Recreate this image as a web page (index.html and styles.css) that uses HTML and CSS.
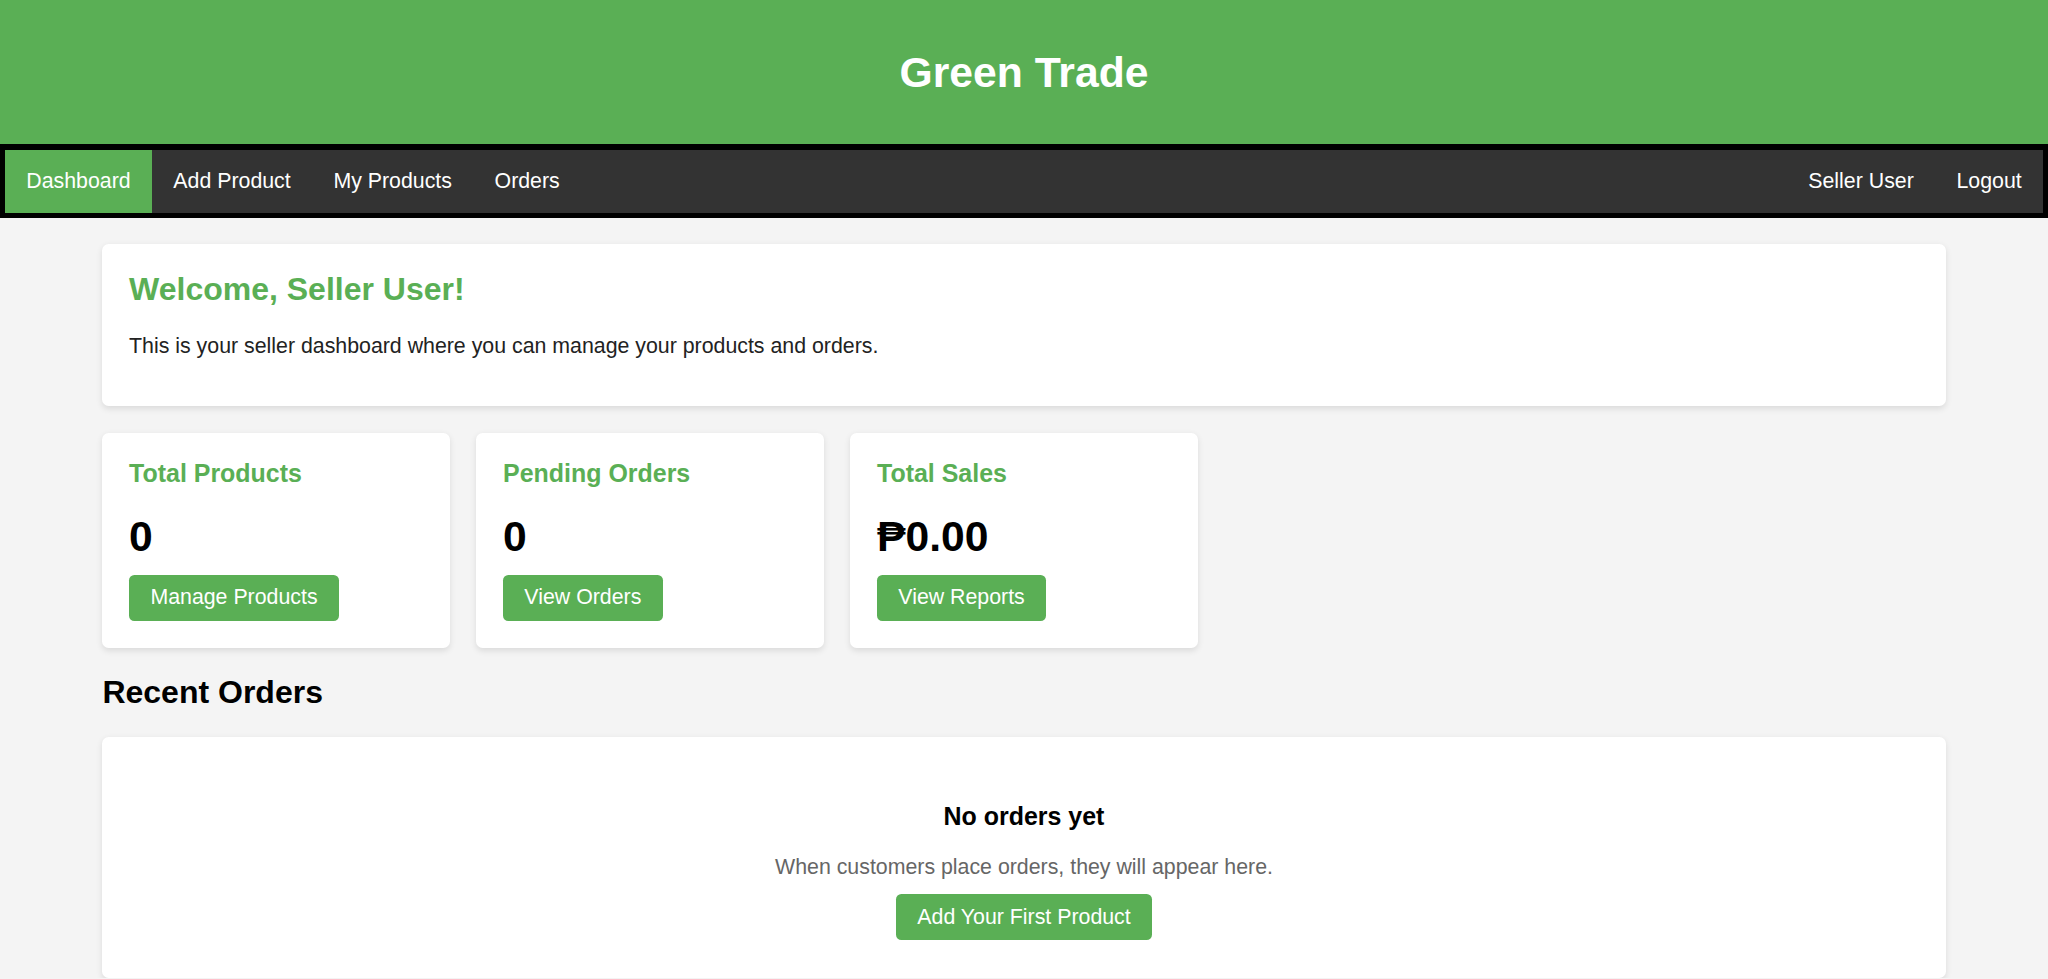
FILE: index.html
```html
<!DOCTYPE html>
<html lang="en">
<head>
<meta charset="utf-8">
<title>Green Trade - Seller Dashboard</title>
<link rel="stylesheet" href="styles.css">
</head>
<body>
<header class="site-header">
  <h1 class="site-title">Green Trade</h1>
</header>
<nav class="main-nav">
  <div class="nav-left">
    <a class="nav-link active" href="#">Dashboard</a>
    <a class="nav-link" href="#">Add Product</a>
    <a class="nav-link" href="#">My Products</a>
    <a class="nav-link" href="#">Orders</a>
  </div>
  <div class="nav-right">
    <a class="nav-link" href="#">Seller User</a>
    <a class="nav-link" href="#">Logout</a>
  </div>
</nav>
<main class="container">
  <section class="card welcome">
    <h2 class="welcome-title">Welcome, Seller User!</h2>
    <p class="welcome-text">This is your seller dashboard where you can manage your products and orders.</p>
  </section>
  <section class="stats">
    <div class="card stat">
      <h3 class="stat-title">Total Products</h3>
      <div class="stat-value">0</div>
      <a class="btn" href="#">Manage Products</a>
    </div>
    <div class="card stat">
      <h3 class="stat-title">Pending Orders</h3>
      <div class="stat-value">0</div>
      <a class="btn" href="#">View Orders</a>
    </div>
    <div class="card stat">
      <h3 class="stat-title">Total Sales</h3>
      <div class="stat-value">₱0.00</div>
      <a class="btn" href="#">View Reports</a>
    </div>
  </section>
  <h2 class="section-title">Recent Orders</h2>
  <section class="card orders">
    <div class="empty-state">
      <h3 class="empty-title">No orders yet</h3>
      <p class="empty-text">When customers place orders, they will appear here.</p>
      <a class="btn" href="#">Add Your First Product</a>
    </div>
  </section>
</main>
</body>
</html>
```

FILE: styles.css
```css
* {
  box-sizing: border-box;
}

html, body {
  margin: 0;
  padding: 0;
}

body {
  font-family: "Liberation Sans", Arial, "DejaVu Sans", sans-serif;
  font-size: 21.333px;
  background: #f4f4f4;
  color: #222;
}

a {
  text-decoration: none;
}

.site-header {
  background: #5aaf55;
  height: 144px;
  display: flex;
  align-items: center;
  justify-content: center;
}

.site-title {
  margin: 0;
  color: #fff;
  font-size: 42.667px;
  font-weight: bold;
}

.main-nav {
  background: #333;
  border: 5.333px solid #000;
  border-top-width: 6px;
  display: flex;
  justify-content: space-between;
}

.nav-left,
.nav-right {
  display: flex;
}

.nav-link {
  color: #fff;
  padding: 19px 21.333px;
  line-height: 24.5px;
}

.nav-link.active {
  background: #5aaf55;
}

.container {
  width: 90%;
  margin: 26.5px auto 0;
}

.card {
  background: #fff;
  border-radius: 6.667px;
  box-shadow: 0 2.667px 6.667px rgba(0, 0, 0, 0.1);
  padding: 26.667px;
}

.welcome-title {
  margin: 0 0 26.5px;
  font-size: 32px;
  color: #5aaf55;
}

.welcome-text {
  margin: 0 0 20.5px;
}

.stats {
  display: grid;
  grid-template-columns: repeat(5, 1fr);
  gap: 26.667px;
  margin-top: 27px;
}

.stat {
  padding-top: 25.5px;
  padding-bottom: 27.8px;
}

.stat-title {
  margin: 0 0 24px;
  font-size: 24.96px;
  color: #5aaf55;
}

.stat-value {
  font-size: 42.667px;
  font-weight: bold;
  color: #000;
  margin-bottom: 14px;
}

.btn {
  display: inline-block;
  background: #5aaf55;
  color: #fff;
  padding: 10.667px 21.333px;
  border-radius: 5.333px;
  line-height: 24.5px;
}

.section-title {
  margin: 25.5px 0 26.5px;
  font-size: 32px;
  color: #000;
}

.orders {
  padding-bottom: 38.5px;
}

.empty-state {
  text-align: center;
  padding-top: 38.3px;
}

.empty-title {
  margin: 0 0 24px;
  font-size: 24.96px;
  color: #000;
}

.empty-text {
  margin: 0 0 13.5px;
  color: #666;
}
```
